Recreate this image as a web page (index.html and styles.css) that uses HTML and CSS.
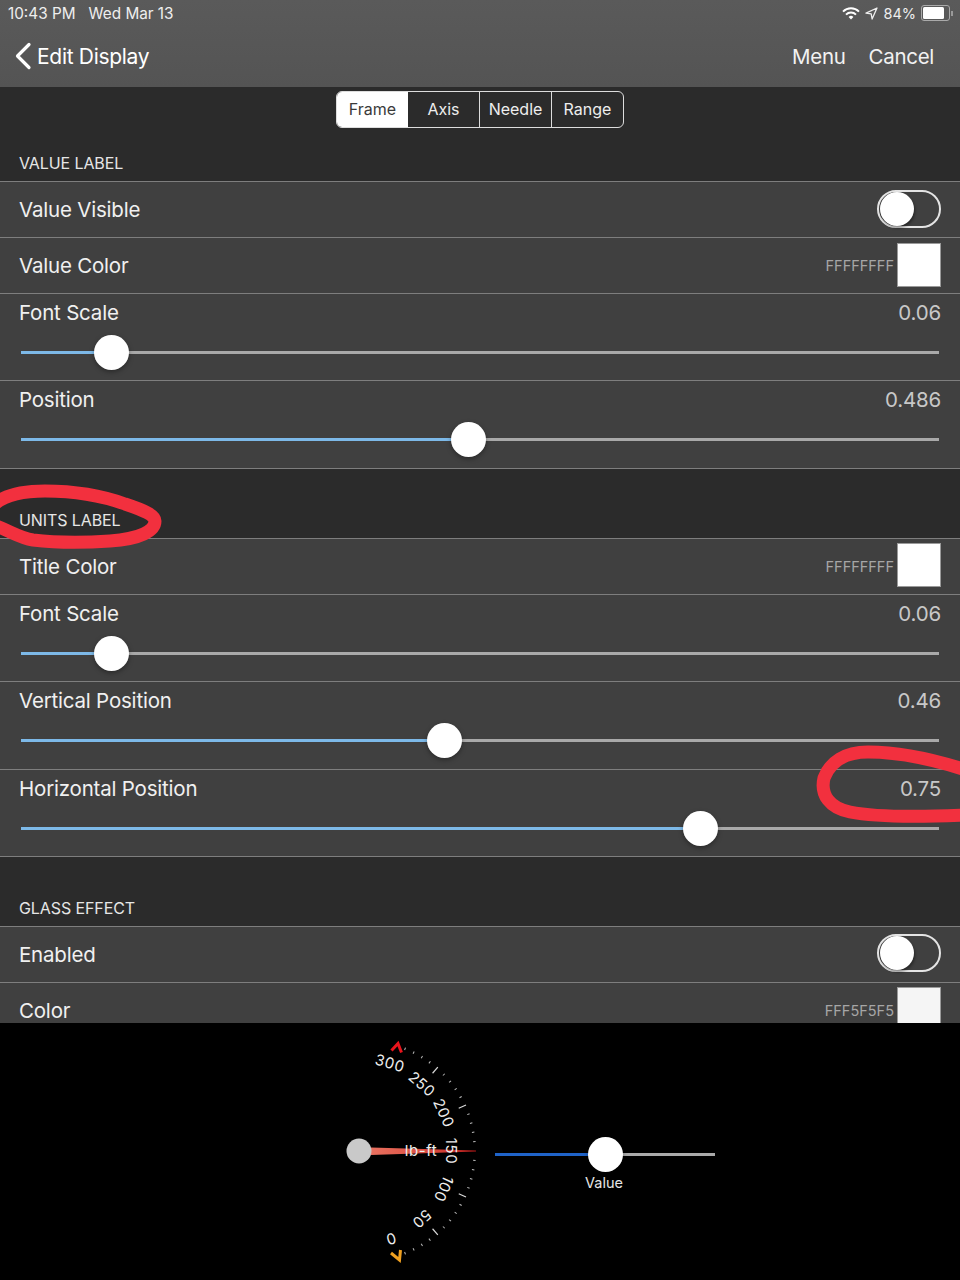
FILE: index.html
```html
<!DOCTYPE html>
<html lang="en">
<head>
    <meta charset="UTF-8">
    <meta name="viewport" content="width=device-width, initial-scale=1.0">
    <title>Edit Display</title>
    <link rel="stylesheet" href="styles.css">
</head>
<body>
    <header class="topBar">
        <div class="status">
            <span class="statusTime">10:43 PM</span>
            <span class="statusDate">Wed Mar 13</span>
            <div class="statusRight">
                <svg class="wifi" width="18" height="13" viewBox="0 0 18 13">
                    <path d="M1 4.6a11.4 11.4 0 0 1 16 0" fill="none" stroke="#fff" stroke-width="2"/>
                    <path d="M4 7.6a7.2 7.2 0 0 1 10 0" fill="none" stroke="#fff" stroke-width="2"/>
                    <path d="M6.6 10a3.4 3.4 0 0 1 4.8 0L9 12.6z" fill="#fff"/>
                </svg>
                <svg class="locate" width="13" height="13" viewBox="0 0 13 13">
                    <path d="M12 1 1 6.2l5.2.6.9 5.2z" fill="none" stroke="#eee" stroke-width="1.3" stroke-linejoin="round"/>
                </svg>
                <span>84%</span>
                <div class="battery"><div class="batteryFill"></div></div>
                <div class="batteryCap"></div>
            </div>
        </div>
        <nav class="navBar">
            <svg class="chevron" width="18" height="28" viewBox="0 0 18 28">
                <path d="M15 2.5 3.5 14 15 25.5" fill="none" stroke="#fff" stroke-width="3.2" stroke-linecap="round" stroke-linejoin="round"/>
            </svg>
            <span class="navTitle">Edit Display</span>
            <span class="navLink menuLink">Menu</span>
            <span class="navLink">Cancel</span>
        </nav>
    </header>

    <main class="settings">
        <div class="segments">
            <div class="segment selected">Frame</div>
            <div class="segment">Axis</div>
            <div class="segment">Needle</div>
            <div class="segment">Range</div>
        </div>

        <h2 class="groupHead first">VALUE LABEL</h2>
        <section class="group">
            <div class="row">
                <span>Value Visible</span>
                <div class="switch"><div class="knob"></div></div>
            </div>
            <div class="row">
                <span>Value Color</span>
                <div class="colorPick"><span class="hex">FFFFFFFF</span><div class="swatch"></div></div>
            </div>
            <div class="row sliderRow">
                <div class="sliderHead"><span>Font Scale</span><span class="value">0.06</span></div>
                <div class="slider">
                    <div class="fill" style="width: 9.9%"></div>
                    <div class="thumb" style="left: 9.9%"></div>
                </div>
            </div>
            <div class="row sliderRow">
                <div class="sliderHead"><span>Position</span><span class="value">0.486</span></div>
                <div class="slider">
                    <div class="fill" style="width: 48.7%"></div>
                    <div class="thumb" style="left: 48.7%"></div>
                </div>
            </div>
        </section>

        <h2 class="groupHead">UNITS LABEL</h2>
        <section class="group">
            <div class="row">
                <span>Title Color</span>
                <div class="colorPick"><span class="hex">FFFFFFFF</span><div class="swatch"></div></div>
            </div>
            <div class="row sliderRow">
                <div class="sliderHead"><span>Font Scale</span><span class="value">0.06</span></div>
                <div class="slider">
                    <div class="fill" style="width: 9.9%"></div>
                    <div class="thumb" style="left: 9.9%"></div>
                </div>
            </div>
            <div class="row sliderRow">
                <div class="sliderHead"><span>Vertical Position</span><span class="value">0.46</span></div>
                <div class="slider">
                    <div class="fill" style="width: 46.1%"></div>
                    <div class="thumb" style="left: 46.1%"></div>
                </div>
            </div>
            <div class="row sliderRow">
                <div class="sliderHead"><span>Horizontal Position</span><span class="value">0.75</span></div>
                <div class="slider">
                    <div class="fill" style="width: 74%"></div>
                    <div class="thumb" style="left: 74%"></div>
                </div>
            </div>
        </section>

        <h2 class="groupHead">GLASS EFFECT</h2>
        <section class="group">
            <div class="row">
                <span>Enabled</span>
                <div class="switch"><div class="knob"></div></div>
            </div>
            <div class="row">
                <span>Color</span>
                <div class="colorPick"><span class="hex">FFF5F5F5</span><div class="swatch offWhite"></div></div>
            </div>
        </section>
    </main>

    <footer class="preview">
        <svg class="gauge" width="150" height="257" viewBox="340 1023 150 257">
            <g class="minorTicks">
                <line x1="473.5" x2="476" y1="1151" y2="1151" transform="rotate(-68.6 365 1151)"/>
                <line x1="473.5" x2="476" y1="1151" y2="1151" transform="rotate(-63.7 365 1151)"/>
                <line x1="473.5" x2="476" y1="1151" y2="1151" transform="rotate(-58.8 365 1151)"/>
                <line x1="473.5" x2="476" y1="1151" y2="1151" transform="rotate(-53.9 365 1151)"/>
                <line x1="473.5" x2="476" y1="1151" y2="1151" transform="rotate(-44.1 365 1151)"/>
                <line x1="473.5" x2="476" y1="1151" y2="1151" transform="rotate(-39.2 365 1151)"/>
                <line x1="473.5" x2="476" y1="1151" y2="1151" transform="rotate(-34.3 365 1151)"/>
                <line x1="473.5" x2="476" y1="1151" y2="1151" transform="rotate(-29.4 365 1151)"/>
                <line x1="473.5" x2="476" y1="1151" y2="1151" transform="rotate(-19.6 365 1151)"/>
                <line x1="473.5" x2="476" y1="1151" y2="1151" transform="rotate(-14.7 365 1151)"/>
                <line x1="473.5" x2="476" y1="1151" y2="1151" transform="rotate(-9.8 365 1151)"/>
                <line x1="473.5" x2="476" y1="1151" y2="1151" transform="rotate(-4.9 365 1151)"/>
                <line x1="473.5" x2="476" y1="1151" y2="1151" transform="rotate(4.9 365 1151)"/>
                <line x1="473.5" x2="476" y1="1151" y2="1151" transform="rotate(9.8 365 1151)"/>
                <line x1="473.5" x2="476" y1="1151" y2="1151" transform="rotate(14.7 365 1151)"/>
                <line x1="473.5" x2="476" y1="1151" y2="1151" transform="rotate(19.6 365 1151)"/>
                <line x1="473.5" x2="476" y1="1151" y2="1151" transform="rotate(29.4 365 1151)"/>
                <line x1="473.5" x2="476" y1="1151" y2="1151" transform="rotate(34.3 365 1151)"/>
                <line x1="473.5" x2="476" y1="1151" y2="1151" transform="rotate(39.2 365 1151)"/>
                <line x1="473.5" x2="476" y1="1151" y2="1151" transform="rotate(44.1 365 1151)"/>
                <line x1="473.5" x2="476" y1="1151" y2="1151" transform="rotate(53.9 365 1151)"/>
                <line x1="473.5" x2="476" y1="1151" y2="1151" transform="rotate(58.8 365 1151)"/>
                <line x1="473.5" x2="476" y1="1151" y2="1151" transform="rotate(63.7 365 1151)"/>
                <line x1="473.5" x2="476" y1="1151" y2="1151" transform="rotate(68.6 365 1151)"/>
            </g>
            <g class="majorTicks">
                <line x1="468" x2="476" y1="1151" y2="1151" transform="rotate(-49 365 1151)"/>
                <line x1="468" x2="476" y1="1151" y2="1151" transform="rotate(-24.5 365 1151)"/>
                <line x1="468" x2="476" y1="1151" y2="1151" transform="rotate(24.5 365 1151)"/>
                <line x1="468" x2="476" y1="1151" y2="1151" transform="rotate(49 365 1151)"/>
            </g>
            <polyline class="rangeMark" points="391.5,1050.5 398,1043.5 401.5,1052.5" stroke="#e8141c"/>
            <polyline class="rangeMark" points="391,1253 399.5,1260 400.5,1250" stroke="#f0a020"/>
            <polygon points="371,1147.5 476,1150.6 476,1151.4 371,1155" fill="url(#needleFade)"/>
            <defs>
                <linearGradient id="needleFade" x1="0" x2="1" y1="0" y2="0">
                    <stop offset="0" stop-color="#e8705f"/>
                    <stop offset="0.6" stop-color="#d9483c"/>
                    <stop offset="1" stop-color="#b01818"/>
                </linearGradient>
            </defs>
            <circle cx="359" cy="1151" r="12.5" fill="#c9c9c9"/>
            <g class="gaugeText">
                <text x="0" y="0" transform="translate(390 1063) rotate(16.5)">300</text>
                <text x="0" y="0" transform="translate(422 1084) rotate(41)">250</text>
                <text x="0" y="0" transform="translate(444 1113) rotate(65.5)">200</text>
                <text x="0" y="0" transform="translate(451 1151) rotate(90)">150</text>
                <text x="0" y="0" transform="translate(444 1189) rotate(114.5)">100</text>
                <text x="0" y="0" transform="translate(422 1219) rotate(139)">50</text>
                <text x="0" y="0" transform="translate(391 1239) rotate(163.5)">0</text>
                <text x="421" y="1150">lb-ft</text>
            </g>
        </svg>
        <div class="previewControl">
            <div class="slider previewSlider">
                <div class="fill deep" style="width: 50%"></div>
                <div class="thumb" style="left: 50%"></div>
            </div>
            <div class="previewLabel">Value</div>
        </div>
    </footer>

    <!-- red marker scribbled on top of the screenshot -->
    <svg class="scribbles" width="960" height="1280" viewBox="0 0 960 1280">
        <path d="M-4 503C6 495 20 491 45 491C75 491 100 495 125 504C143 510 155 515 155 521C155 531 140 539 110 541C80 543 50 542 33 540C20 538 8 530 -4 526" />
        <path d="M966 770C935 760 900 752 868 752C845 752 830 762 824 778C820 795 830 808 850 812C870 816 900 818 966 815" />
    </svg>
</body>
</html>
```

FILE: styles.css
```css
html{
    height: 100%;
}
body{
    margin: 0;
    padding: 0;
    width: 960px;
    height: 1280px;
    position: relative;
    overflow: hidden;
    display: flex;
    flex-direction: column;
    background: #000;
    color: #f0f0f0;
    font-family: "Inter", "Liberation Sans", sans-serif;
}

/* top bar */
.topBar{
    height: 87px;
    flex: none;
    background: linear-gradient(#5a5a5a, #545454);
    color: #fff;
}
.status{
    height: 26px;
    padding: 0 8px;
    display: flex;
    align-items: center;
    gap: 13px;
    font-size: 15.3px;
    color: #eee;
}
.statusRight{
    margin-left: auto;
    margin-right: -1px;
    display: flex;
    align-items: center;
    gap: 5px;
    font-size: 14.5px;
}
.battery{
    width: 25px;
    height: 12px;
    padding: 1px;
    border: 1px solid #aaa;
    border-radius: 3px;
    box-sizing: content-box;
}
.batteryFill{
    width: 84%;
    height: 100%;
    background: #fff;
    border-radius: 1.5px;
}
.batteryCap{
    width: 2px;
    height: 5px;
    background: #999;
    margin-left: -4px;
}
.navBar{
    height: 61px;
    display: flex;
    align-items: center;
    padding: 0 26px 1px 14px;
    box-sizing: border-box;
    font-size: 21px;
    letter-spacing: -0.3px;
}
.navTitle{
    margin-left: 5px;
}
.navLink{
    font-size: 20.5px;
    color: #f2f2f2;
}
.menuLink{
    margin-left: auto;
    margin-right: 23px;
}

/* settings list */
.settings{
    height: 936px;
    flex: none;
    overflow: hidden;
    background: #2b2b2b;
}
.segments{
    width: 288px;
    height: 37px;
    margin: 4px auto 0;
    box-sizing: border-box;
    display: flex;
    border: 1.5px solid #ddd;
    border-radius: 6px;
    overflow: hidden;
}
.segment{
    flex: 1;
    display: flex;
    align-items: center;
    justify-content: center;
    padding-bottom: 1px;
    font-size: 16px;
    border-left: 1.5px solid #ddd;
    color: #eee;
}
.segment:first-child{
    border-left: 0;
}
.segment.selected{
    background: #fff;
    color: #3a3a3a;
}
.segment.selected + .segment{
    border-left: 0;
}
.groupHead{
    margin: 0;
    height: 69px;
    box-sizing: border-box;
    padding: 0 19px 8px;
    display: flex;
    align-items: flex-end;
    font-size: 16px;
    font-weight: 400;
    letter-spacing: -0.1px;
    color: #e6e6e6;
}
.groupHead.first{
    height: 53px;
}
.group{
    background: #404040;
    border-bottom: 1px solid #7e7e7e;
}
.row{
    height: 56px;
    box-sizing: border-box;
    padding: 0 19px;
    border-top: 1px solid #7e7e7e;
    display: flex;
    align-items: center;
    justify-content: space-between;
    font-size: 20.5px;
    letter-spacing: -0.2px;
}
.sliderRow{
    height: 87.4px;
    display: block;
    padding-top: 6px;
}
.sliderHead{
    height: 26px;
    line-height: 26px;
    display: flex;
    justify-content: space-between;
}
.value{
    color: #c8c8c8;
}
.slider{
    position: relative;
    height: 3px;
    margin: 25px 2px 0;
    background: #a9a9a9;
}
.fill{
    height: 100%;
    background: #7db9e8;
}
.fill.deep{
    background: #1f63c8;
}
.thumb{
    position: absolute;
    top: 50%;
    width: 35px;
    height: 35px;
    margin: -17.5px 0 0 -17.5px;
    border-radius: 50%;
    background: #fff;
    box-shadow: 0 2px 5px rgba(0, 0, 0, 0.35);
}

/* small controls */
.switch{
    width: 64px;
    height: 38px;
    margin-bottom: 2px;
    box-sizing: border-box;
    border: 2px solid #e4e4e4;
    border-radius: 19px;
}
.knob{
    width: 34px;
    height: 34px;
    margin-left: 1px;
    border-radius: 50%;
    background: #fff;
    box-shadow: 1px 2px 3px rgba(0, 0, 0, 0.4);
}
.colorPick{
    display: flex;
    align-items: center;
    gap: 3px;
    margin-bottom: 2px;
}
.hex{
    margin-top: 2px;
    font-size: 14.5px;
    letter-spacing: 0;
    color: #a6a6a6;
}
.swatch{
    width: 44px;
    height: 44px;
    box-sizing: border-box;
    background: #fff;
    border: 1px solid #9a9a9a;
}
.swatch.offWhite{
    background: #f5f5f5;
}

/* gauge preview */
.preview{
    flex: 1;
    display: flex;
    padding-left: 340px;
    background: #000;
}
.gauge{
    flex: none;
}
.minorTicks line{
    stroke: #bdbdbd;
    stroke-width: 1;
}
.majorTicks line{
    stroke: #d8d8d8;
    stroke-width: 1.2;
}
.rangeMark{
    fill: none;
    stroke-width: 3;
    stroke-linejoin: miter;
}
.gaugeText text{
    fill: #eee;
    font-size: 15px;
    letter-spacing: 0.6px;
    text-anchor: middle;
    dominant-baseline: central;
}
.previewControl{
    width: 220px;
    margin-left: 5px;
    padding-top: 130px;
}
.previewSlider{
    margin: 0;
}
.previewLabel{
    margin-top: 18px;
    padding-right: 2px;
    text-align: center;
    font-size: 14.5px;
    color: #e6e6e6;
}

.scribbles{
    position: absolute;
    left: 0;
    top: 0;
    pointer-events: none;
}
.scribbles path{
    fill: none;
    stroke: #f2303e;
    stroke-width: 13;
    stroke-linecap: round;
    stroke-linejoin: round;
}
```
